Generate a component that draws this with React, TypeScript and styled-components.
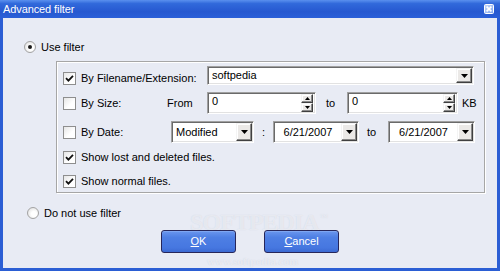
import React from 'react';
import styled, { createGlobalStyle } from 'styled-components';

const GlobalStyle = createGlobalStyle`
  html, body {
    margin: 0;
    padding: 0;
    background: #fff;
  }
  body {
    font-family: 'Liberation Sans', Arial, sans-serif;
    font-size: 11px;
    line-height: 13px;
    color: #000;
  }
`;

const Window = styled.div`
  position: relative;
  width: 500px;
  height: 271px;
  display: flex;
  flex-direction: column;
  background: #2b5ed4;
  overflow: hidden;
`;

const TitleBar = styled.div`
  height: 18px;
  flex-shrink: 0;
  display: flex;
  align-items: center;
  justify-content: space-between;
  padding: 0 6px 0 3px;
  background: linear-gradient(#5a90ee 0%, #3169db 20%, #2658d0 65%, #2a5fd8 100%);
  color: #fff;
`;

const TitleText = styled.span`
  font-size: 11px;
  letter-spacing: -0.1px;
`;

const Body = styled.div`
  flex: 1;
  margin: 0 3px 3px;
  padding: 23px 21px 0;
  background: #e8ebf4;
  display: flex;
  flex-direction: column;
  align-items: flex-start;
`;

const RadioRow = styled.label<{ $mt?: number; $ml?: number }>`
  display: flex;
  align-items: center;
  gap: 5px;
  height: 12px;
  margin-top: ${(p) => p.$mt ?? 0}px;
  margin-left: ${(p) => p.$ml ?? 0}px;
`;

const RadioDot = styled.span<{ $checked?: boolean }>`
  position: relative;
  width: 12px;
  height: 12px;
  box-sizing: border-box;
  border-radius: 50%;
  border: 1px solid #a3a3a3;
  background: radial-gradient(circle at 60% 60%, #ffffff 30%, #d8d8d8 100%);
  flex-shrink: 0;

  &::after {
    content: '';
    display: ${(p) => (p.$checked ? 'block' : 'none')};
    position: absolute;
    left: 3px;
    top: 3px;
    width: 4px;
    height: 4px;
    border-radius: 50%;
    background: #1a1a1a;
  }
`;

const GroupBox = styled.div`
  margin-top: 8px;
  margin-left: 32px;
  width: 429px;
  box-sizing: border-box;
  border: 1px solid #a6a6a6;
  box-shadow: 1px 1px 0 #fff, inset 1px 1px 0 #fff;
  padding: 4px 0 4px 6px;
  display: flex;
  flex-direction: column;
`;

const Row = styled.div<{ $h: number; $mt?: number; $align?: string }>`
  display: flex;
  align-items: ${(p) => p.$align ?? 'center'};
  height: ${(p) => p.$h}px;
  margin-top: ${(p) => p.$mt ?? 0}px;
`;

const CheckBox = styled.span`
  width: 13px;
  height: 13px;
  box-sizing: border-box;
  border: 1px solid #8e8e8e;
  background: linear-gradient(135deg, #e6e6e6 0%, #ffffff 60%);
  display: flex;
  align-items: center;
  justify-content: center;
  flex-shrink: 0;
  margin-right: 5px;
`;

const Label = styled.span<{ $w?: number; $pl?: number }>`
  width: ${(p) => (p.$w ? `${p.$w}px` : 'auto')};
  padding-left: ${(p) => p.$pl ?? 0}px;
  box-sizing: border-box;
  flex-shrink: 0;
  white-space: nowrap;
`;

const Field = styled.div<{ $w: number; $h: number }>`
  width: ${(p) => p.$w}px;
  height: ${(p) => p.$h}px;
  box-sizing: border-box;
  flex-shrink: 0;
  display: flex;
  background: #fff;
  border: 1px solid;
  border-color: #a0a0a0 #ffffff #ffffff #a0a0a0;
  box-shadow: inset 1px 1px 0 #6a6a6a, inset -1px -1px 0 #e2e2e2;
  padding: 1px;
`;

const FieldText = styled.span<{ $center?: boolean; $top?: boolean }>`
  flex: 1;
  display: flex;
  align-items: ${(p) => (p.$top ? 'flex-start' : 'center')};
  justify-content: ${(p) => (p.$center ? 'center' : 'flex-start')};
  padding-left: ${(p) => (p.$center ? 0 : 3)}px;
  padding-top: ${(p) => (p.$top ? 1 : 0)}px;
  white-space: nowrap;
`;

const RaisedButton = styled.span<{ $w: number }>`
  width: ${(p) => p.$w}px;
  box-sizing: border-box;
  flex-shrink: 0;
  display: flex;
  align-items: center;
  justify-content: center;
  background: #ebe9e7;
  border: 1px solid;
  border-color: #f4f4f4 #404040 #404040 #f4f4f4;
  box-shadow: inset -1px -1px 0 #8a8a8a, inset 1px 1px 0 #ffffff;
`;

const SpinColumn = styled.span`
  display: flex;
  flex-direction: column;
  margin-right: 1px;
  & > span {
    flex: 1;
  }
`;

const ButtonRow = styled.div`
  align-self: stretch;
  margin-top: 11px;
  display: flex;
  justify-content: center;
  gap: 28px;
`;

const XPButton = styled.button`
  width: 75px;
  height: 23px;
  padding: 0;
  border: 1px solid #26265a;
  border-radius: 3px;
  background: linear-gradient(#6b97ee 0%, #4e7fe4 30%, #4677e0 80%, #3b69d2 100%);
  box-shadow: inset 0 1px 0 #7ea6f2;
  color: #fff;
  font-family: 'Liberation Sans', Arial, sans-serif;
  font-size: 11px;
  line-height: 13px;

  u {
    text-decoration: underline;
    text-underline-offset: 1px;
  }
`;

/* faint site watermark lying over the dialog */
const Watermark = styled.div`
  position: absolute;
  left: 190px;
  top: 204px;
  display: flex;
  flex-direction: column;
  pointer-events: none;
  color: rgba(255, 255, 255, 0.5);
  text-shadow: 0 0 1px rgba(140, 150, 175, 0.3);
  font-family: 'Liberation Serif', 'Times New Roman', serif;
`;

const MarkBig = styled.span`
  font-size: 24px;
  line-height: 27px;
  font-weight: bold;
  letter-spacing: -1px;
  sup {
    font-size: 8px;
    letter-spacing: 0;
    vertical-align: 10px;
    margin-left: 2px;
  }
`;

const MarkSmall = styled.span`
  margin-left: 17px;
  margin-top: 19px;
  font-size: 11px;
  line-height: 12px;
  font-weight: bold;
`;

const Tick = () => (
  <svg width="9" height="9" viewBox="0 0 9 9">
    <path d="M1 4.2 L3.4 6.6 L8 1.8" fill="none" stroke="#111" strokeWidth="1.8" />
  </svg>
);

const Arrow = ({ w, h }: { w: number; h: number }) => (
  <svg width={w} height={h} viewBox={`0 0 ${w} ${h}`}>
    <polygon points={`0,0 ${w},0 ${w / 2},${h}`} fill="#000" />
  </svg>
);

const UpArrow = () => (
  <svg width="5" height="3" viewBox="0 0 5 3">
    <polygon points="0,3 5,3 2.5,0" fill="#000" />
  </svg>
);

const DownArrow = () => (
  <svg width="5" height="3" viewBox="0 0 5 3">
    <polygon points="0,0 5,0 2.5,3" fill="#000" />
  </svg>
);

const CloseIcon = () => (
  <svg width="10" height="10" viewBox="0 0 10 10">
    <defs>
      <linearGradient id="cg" x1="0" y1="0" x2="1" y2="1">
        <stop offset="0" stopColor="#c8dafb" />
        <stop offset="1" stopColor="#7fa5ee" />
      </linearGradient>
    </defs>
    <rect x="0.5" y="0.5" width="9" height="9" rx="1" fill="url(#cg)" stroke="#ffffff" />
    <path d="M2.6 2.6 L7.4 7.4 M7.4 2.6 L2.6 7.4" stroke="#ffffff" strokeWidth="1.6" />
  </svg>
);

const Combo: React.FC<{ w: number; h: number; value: string; center?: boolean }> = ({
  w,
  h,
  value,
  center,
}) => (
  <Field $w={w} $h={h}>
    <FieldText $center={center}>{value}</FieldText>
    <RaisedButton $w={16}>
      <Arrow w={7} h={4} />
    </RaisedButton>
  </Field>
);

const Spin: React.FC<{ w: number; value: string }> = ({ w, value }) => (
  <Field $w={w} $h={22}>
    <FieldText $top>{value}</FieldText>
    <SpinColumn>
      <RaisedButton $w={12}>
        <UpArrow />
      </RaisedButton>
      <RaisedButton $w={12}>
        <DownArrow />
      </RaisedButton>
    </SpinColumn>
  </Field>
);

const Check: React.FC<{ checked?: boolean }> = ({ checked }) => (
  <CheckBox>{checked && <Tick />}</CheckBox>
);

export default function App() {
  return (
    <>
      <GlobalStyle />
      <Window>
        <TitleBar>
          <TitleText>Advanced filter</TitleText>
          <CloseIcon />
        </TitleBar>
        <Body>
          <RadioRow>
            <RadioDot $checked />
            <span>Use filter</span>
          </RadioRow>

          <GroupBox>
            <Row $h={19} $align="flex-end">
              <Check checked />
              <Label $w={126}>By Filename/Extension:</Label>
              <Combo w={267} h={19} value="softpedia" />
            </Row>

            <Row $h={22} $mt={7}>
              <Check />
              <Label $w={86}>By Size:</Label>
              <Label $w={40}>From</Label>
              <Spin w={109} value="0" />
              <Label $w={31} $pl={10}>
                to
              </Label>
              <Spin w={111} value="0" />
              <Label $pl={4}>KB</Label>
            </Row>

            <Row $h={22} $mt={7}>
              <Check />
              <Label $w={90}>By Date:</Label>
              <Combo w={83} h={22} value="Modified" />
              <Label $w={19} $pl={8}>
                :
              </Label>
              <Combo w={86} h={22} value="6/21/2007" center />
              <Label $w={29} $pl={8}>
                to
              </Label>
              <Combo w={87} h={22} value="6/21/2007" center />
            </Row>

            <Row $h={14} $mt={7}>
              <Check checked />
              <Label>Show lost and deleted files.</Label>
            </Row>

            <Row $h={14} $mt={10}>
              <Check checked />
              <Label>Show normal files.</Label>
            </Row>
          </GroupBox>

          <RadioRow $mt={14} $ml={3}>
            <RadioDot />
            <span>Do not use filter</span>
          </RadioRow>

          <ButtonRow>
            <XPButton>
              <u>O</u>K
            </XPButton>
            <XPButton>
              <u>C</u>ancel
            </XPButton>
          </ButtonRow>
        </Body>
        <Watermark>
          <MarkBig>
            SOFTPEDIA<sup>™</sup>
          </MarkBig>
          <MarkSmall>www.softpedia.com</MarkSmall>
        </Watermark>
      </Window>
    </>
  );
}
